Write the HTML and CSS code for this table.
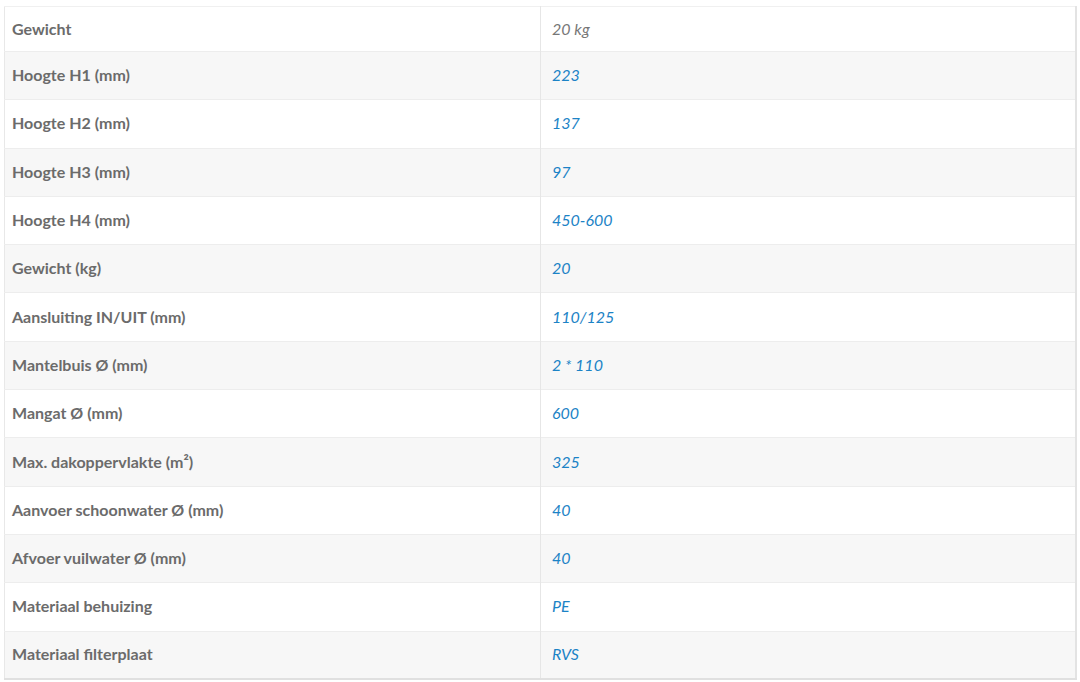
FILE: index.html
```html
<!DOCTYPE html>
<html lang="nl">
<head>
<meta charset="utf-8">
<title>Specificaties</title>
<link rel="stylesheet" href="styles.css">
</head>
<body>
<table class="specs">
  <tbody>
    <tr class="first"><th>Gewicht</th><td class="plain">20 kg</td></tr>
    <tr><th>Hoogte H1 (mm)</th><td>223</td></tr>
    <tr><th>Hoogte H2 (mm)</th><td>137</td></tr>
    <tr><th>Hoogte H3 (mm)</th><td>97</td></tr>
    <tr><th>Hoogte H4 (mm)</th><td>450-600</td></tr>
    <tr><th>Gewicht (kg)</th><td>20</td></tr>
    <tr><th>Aansluiting IN/UIT (mm)</th><td>110/125</td></tr>
    <tr><th>Mantelbuis Ø (mm)</th><td>2 * 110</td></tr>
    <tr><th>Mangat Ø (mm)</th><td>600</td></tr>
    <tr><th>Max. dakoppervlakte (m²)</th><td>325</td></tr>
    <tr><th>Aanvoer schoonwater Ø (mm)</th><td>40</td></tr>
    <tr><th>Afvoer vuilwater Ø (mm)</th><td>40</td></tr>
    <tr><th>Materiaal behuizing</th><td>PE</td></tr>
    <tr><th>Materiaal filterplaat</th><td>RVS</td></tr>
  </tbody>
</table>
</body>
</html>
```
FILE: styles.css
```css
html, body {
  margin: 0;
  padding: 0;
  background: #ffffff;
}
body {
  padding: 6px 0 0 4px;
  font-family: Lato, "Open Sans", sans-serif;
}
.specs {
  width: 1073px;
  border-collapse: collapse;
  border-top: 1px solid #f0f0f0;
  border-left: 1px solid #e8e8e8;
  border-right: 2px solid #e3e3e3;
  border-bottom: 2px solid #e0e0e0;
}
.specs tr {
  height: 48.3px;
  border-bottom: 1px solid #ededed;
}
.specs tr.first {
  height: 45px;
}
.specs tr:nth-child(even) {
  background: #f7f7f7;
}
.specs th {
  width: 528px;
  padding: 0 0 2px 7px;
  text-align: left;
  font-weight: 700;
  font-size: 16px;
  color: #6b6b6b;
  border-right: 1px solid #e6e6e6;
}
.specs td {
  padding: 0 0 2px 11px;
  font-style: italic;
  font-size: 16px;
  color: #1c83c6;
}
.specs td.plain {
  color: #777777;
}
```
